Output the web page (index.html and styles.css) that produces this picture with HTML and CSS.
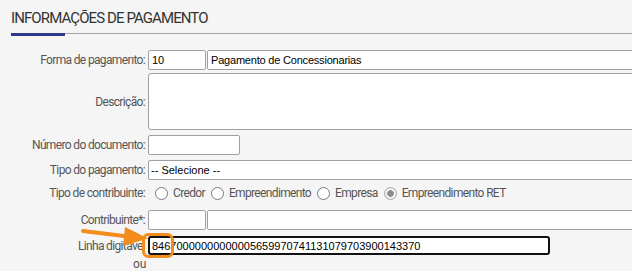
FILE: index.html
```html
<!DOCTYPE html>
<html lang="pt-BR">
<head>
  <meta charset="UTF-8">
  <title>Informações de Pagamento</title>
  <link rel="stylesheet" href="styles.css">
</head>
<body>

    <div class="page">

        <!-- Titulo da secao -->
        <h2 class="section-title">INFORMAÇÕES DE PAGAMENTO</h2>
        <div class="title-accent"></div>

        <!-- Formulario -->
        <form class="pay-form">
            <div class="row row-forma">
                <label class="row-label">Forma de pagamento:</label>
                <input type="text" class="field field-code" value="10">
                <input type="text" class="field field-name" value="Pagamento de Concessionarias">
            </div>

            <div class="row row-desc">
                <label class="row-label">Descrição:</label>
                <textarea class="field field-area"></textarea>
            </div>

            <div class="row row-numero">
                <label class="row-label">Número do documento:</label>
                <input type="text" class="field field-short">
            </div>

            <div class="row row-tipo">
                <label class="row-label">Tipo do pagamento:</label>
                <select class="field field-select">
                    <option>-- Selecione --</option>
                </select>
            </div>

            <div class="row row-radios">
                <label class="row-label">Tipo de contribuinte:</label>
                <div class="radios">
                    <label class="radio"><input type="radio" name="contrib"> Credor</label>
                    <label class="radio"><input type="radio" name="contrib"> Empreendimento</label>
                    <label class="radio"><input type="radio" name="contrib"> Empresa</label>
                    <label class="radio"><input type="radio" name="contrib" checked disabled> Empreendimento RET</label>
                </div>
            </div>

            <div class="row row-contrib">
                <label class="row-label">Contribuinte*:</label>
                <input type="text" class="field field-code">
                <input type="text" class="field field-name">
            </div>

            <div class="row row-linha">
                <label class="row-label">Linha digitavel</label>
                <input type="text" class="field field-linha" value="84670000000000005659970741131079703900143370">
            </div>

            <div class="row row-ou">
                <span class="ou">ou</span>
            </div>
        </form>

        <!-- Anotacao (seta + destaque) -->
        <svg class="annotation" width="632" height="271" viewBox="0 0 632 271">
            <line x1="83" y1="231" x2="128" y2="236.5" stroke="#f28c1a" stroke-width="4" stroke-linecap="round"/>
            <polygon points="125,227 148,238.5 123,246" fill="#f28c1a"/>
            <rect x="143.5" y="234.5" width="29" height="22" rx="5" ry="5" fill="none" stroke="#f28c1a" stroke-width="3"/>
        </svg>

    </div>

</body>
</html>
```

FILE: styles.css
```css
body {
  margin: 0;
  background-color: #f5f5f5;
  font-family: Roboto, "Liberation Sans", sans-serif;
  overflow: hidden;
}

.page {
  position: relative;
  width: 632px;
  height: 271px;
  overflow: hidden;
  padding-left: 11px;
  box-sizing: border-box;
}

/* Titulo */
.section-title {
  margin: 0;
  margin-right: -20px;
  padding-top: 9px;
  height: 24px;
  font-size: 15px;
  font-weight: normal;
  line-height: 19px;
  letter-spacing: -0.9px;
  color: #333;
  border-bottom: 1px solid #a3a3a3;
}

.title-accent {
  width: 54px;
  height: 3px;
  margin-top: -1px;
  background-color: #2e3888;
}

/* Formulario */
.pay-form {
  margin-top: 14px;
}

.row {
  display: flex;
  align-items: center;
}

.row-label {
  width: 137px;
  flex-shrink: 0;
  box-sizing: border-box;
  padding-right: 3px;
  text-align: right;
  font-size: 12px;
  letter-spacing: -0.65px;
  color: #555;
}

.field {
  box-sizing: border-box;
  height: 20px;
  margin: 0;
  padding: 0 3px;
  border: 1px solid #a0a0a0;
  border-radius: 2px;
  background-color: #fff;
  font-family: "Liberation Sans", Arial, sans-serif;
  font-size: 11px;
  color: #000;
  outline: none;
}

.field-code {
  width: 58px;
  flex-shrink: 0;
}

.field-name {
  width: 440px;
  flex-shrink: 0;
  margin-left: 1px;
  letter-spacing: -0.2px;
}

.row-desc {
  margin-top: 3px;
}

.field-area {
  width: 500px;
  height: 57px;
  flex-shrink: 0;
  border-radius: 3px;
  resize: none;
}

.row-numero {
  margin-top: 5px;
}

.field-short {
  width: 92px;
}

.row-tipo {
  margin-top: 5px;
}

.field-select {
  width: 500px;
  flex-shrink: 0;
  appearance: none;
  -webkit-appearance: none;
  padding-left: 2px;
}

/* Radios */
.row-radios {
  height: 26px;
}

.radios {
  display: flex;
  align-items: center;
  padding-left: 7px;
  gap: 6px;
}

.radio {
  display: flex;
  align-items: center;
  gap: 5px;
  font-size: 12px;
  letter-spacing: -0.65px;
  color: #555;
}

.radio input {
  appearance: none;
  -webkit-appearance: none;
  width: 13px;
  height: 13px;
  margin: 0;
  border: 1px solid #7a7a7a;
  border-radius: 50%;
  background-color: #fff;
}

.radio input:checked {
  border-color: #a8a8a8;
  background: radial-gradient(circle, #8c8c8c 0 3px, #f0f0f0 3.5px);
}

.row-contrib {
  margin-top: 4px;
}

.row-linha {
  margin-top: 6px;
}

.field-linha {
  width: 402px;
  height: 19px;
  border: 2px solid #111;
  border-radius: 3px;
  padding-left: 2px;
}

.row-ou {
  padding-left: 122px;
  margin-top: 2px;
}

.ou {
  font-size: 12px;
  color: #555;
}

/* Anotacao */
.annotation {
  position: absolute;
  top: 0;
  left: 0;
  pointer-events: none;
}
```
